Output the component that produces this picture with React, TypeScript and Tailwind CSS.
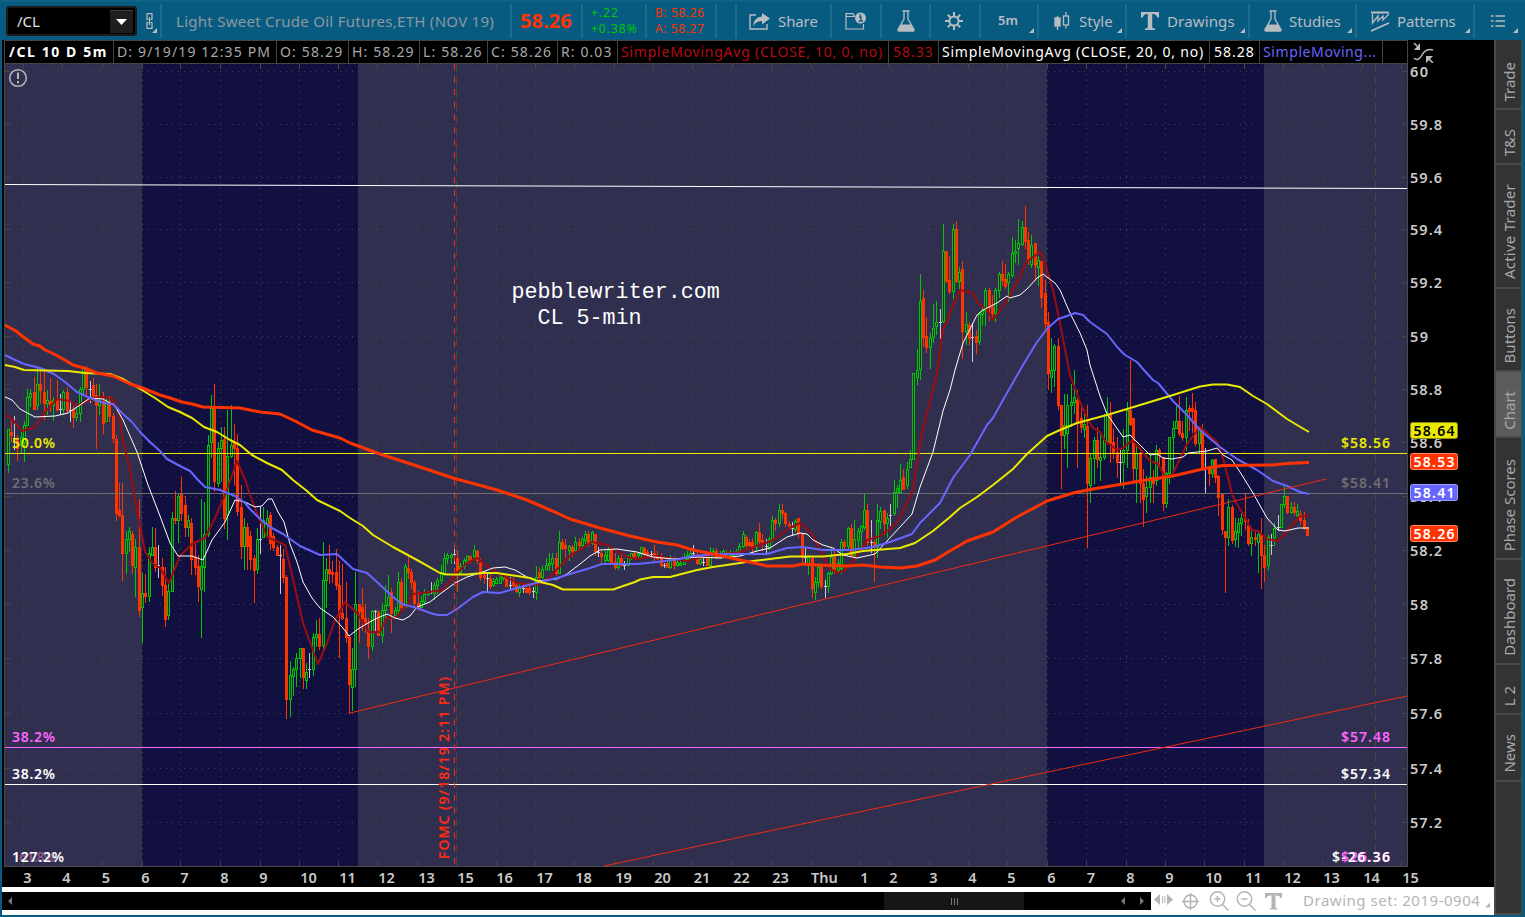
import React from "react";

const FONT = '"Noto Sans", "Open Sans", sans-serif';

// x + direction (u = up, d = down, n = flat), high, body top, body bottom, low
const CANDLES = `
8u 429 429 464 472|11d 421 432 435 441|14n 416 438 438 449|17d 435 439 448 460|21u 432 437 445 453|24u 421 425 442 461
27u 389 397 425 425|30u 389 393 397 406|34d 377 392 409 409|37u 367 384 405 409|40d 368 384 390 403|44d 368 392 403 419
47u 390 400 403 414|50d 378 401 406 411|53u 397 400 405 420|57d 380 398 409 411|60n 394 409 409 414|63u 390 392 409 414
67d 387 392 410 412|70n 400 410 410 421|73d 406 409 417 427|76u 404 413 417 420|80u 387 389 413 421|83u 367 368 389 395
86d 366 368 387 394|90n 381 389 389 402|93d 378 385 395 398|96d 384 395 405 448|99u 384 400 405 414|103d 392 401 423 433
106u 397 403 421 421|109d 396 401 416 421|113d 413 416 438 442|116d 435 439 513 520|119d 483 510 515 516|122d 483 515 553 580
126u 531 539 553 573|129u 527 531 539 551|132d 531 534 565 573|135u 539 547 567 596|139d 499 547 610 616|142u 573 593 607 642
145d 574 593 596 602|149u 547 553 596 601|152u 527 547 555 555|155d 528 547 567 571|158n 545 565 565 577|162d 558 567 585 595
165d 567 585 619 626|168u 583 591 615 619|172u 512 518 591 591|175d 491 518 520 523|178u 493 496 520 542|181d 477 494 513 520
185d 496 505 527 536|188u 515 520 527 536|191d 518 523 559 574|195d 544 557 567 574|198d 555 566 586 601|201u 499 566 589 637
204u 502 534 567 591|208u 435 445 534 536|211u 395 408 442 457|214d 384 408 481 491|218u 442 448 483 486|221u 427 440 448 481
224d 427 439 518 528|227u 410 456 515 539|231u 405 445 456 457|234d 424 443 448 485|237d 434 448 511 515|241d 485 507 546 558
244u 518 527 546 569|247d 523 527 546 569|250d 531 536 559 569|254d 555 558 570 602|257u 528 539 569 573|260n 507 539 539 553
263u 507 520 537 537|267u 510 518 523 537|270d 512 515 543 549|273d 533 536 547 550|277d 545 547 555 555|280n 545 555 555 593
283d 549 559 577 582|286d 575 577 699 718|290u 661 675 699 716|293u 667 669 676 695|296u 653 658 669 686|300u 648 648 658 677
303d 648 648 677 688|306u 663 672 680 688|309n 653 669 669 677|313u 633 637 669 675|316u 620 634 637 646|319d 618 634 646 649
323u 542 580 645 650|326u 558 569 580 607|329d 545 569 573 583|332d 561 572 574 582|336d 549 572 585 589|339d 561 585 613 657
342d 564 613 618 619|346d 582 618 637 642|349d 635 637 684 713|352u 648 669 687 710|355u 572 604 669 686|359d 604 604 611 642
362d 588 607 618 630|365d 604 618 623 632|368d 618 630 646 658|372u 610 611 646 650|375n 610 611 611 630|378d 610 612 635 635
382u 603 610 635 642|385u 585 605 610 620|388u 575 597 605 605|391d 588 592 613 632|395u 607 610 615 618|398u 572 582 610 613
401d 578 582 607 610|405u 564 566 607 607|408d 554 568 572 578|411d 569 572 582 588|414d 580 582 603 607|418d 591 603 607 610
421u 596 601 607 607|424u 589 594 601 603|428u 591 592 594 595|431n 582 592 592 593|434u 582 585 593 599|437u 578 580 585 593
441u 565 573 580 583|444u 553 558 573 575|447u 553 555 558 563|451u 553 555 557 563|454n 549 554 554 563|457d 550 558 570 591
460u 563 566 572 574|464u 558 560 566 568|467u 555 556 561 563|470d 555 556 560 563|474u 545 550 556 558|477d 550 551 560 563
480d 558 563 577 580|484d 574 575 577 583|487n 573 578 578 592|490d 574 578 586 588|493u 578 581 585 586|496u 577 579 583 583
500u 573 577 583 583|503u 573 576 578 580|506d 575 577 586 586|510n 577 585 585 589|513d 577 580 585 587|516d 582 585 591 592
519u 583 588 592 596|523n 584 588 588 592|526d 583 588 592 592|529d 583 588 592 594|533n 587 591 591 597|536u 566 577 592 599
539d 567 572 577 579|542u 565 569 577 578|546u 558 565 569 570|549u 553 563 565 570|552u 553 558 563 570|556d 553 558 573 575
559u 531 542 573 573|562d 539 542 548 549|565d 539 545 548 557|569u 545 546 550 560|572d 545 547 551 556|575u 537 542 550 551
579d 538 542 545 548|582u 537 539 545 548|585u 531 534 540 543|588d 531 534 543 546|592u 531 532 543 544|595d 534 534 551 555
598n 547 552 552 556|601d 551 553 556 562|605u 551 555 560 562|608u 547 550 560 561|611d 549 550 562 562|615d 553 562 567 569
618u 555 558 567 569|621d 555 558 565 565|624n 561 565 565 569|628u 555 557 565 565|631u 553 553 558 559|634d 552 553 557 558
638u 552 553 555 558|641u 547 547 553 557|644d 547 548 553 555|647d 550 552 554 556|651n 551 554 554 557|654d 545 553 555 560
657d 551 556 558 559|661d 553 557 565 566|664n 563 565 565 567|667d 560 563 567 567|670u 555 559 567 568|674d 557 560 565 569
677u 558 562 565 566|680u 561 563 565 565|684u 553 558 564 564|687u 551 555 559 561|690u 549 553 557 558|693n 545 553 553 557
697d 553 555 563 564|700u 556 559 563 564|703n 557 562 562 565|707d 553 558 565 565|710u 547 553 565 566|713u 548 551 555 557
716d 548 551 557 558|720u 551 553 557 558|723u 549 551 557 557|726d 550 553 557 557|730u 550 552 555 556|733u 551 553 555 556
736u 549 551 553 554|739u 543 546 552 553|743u 531 534 546 547|746d 535 537 545 547|749d 539 542 545 546|752d 538 542 547 552
756u 531 532 547 551|759d 523 532 541 545|762d 534 540 543 550|766n 539 546 546 553|769u 537 539 547 549|772u 516 520 539 541
775d 518 520 523 530|779u 504 510 523 526|782d 504 510 513 518|785d 512 513 523 526|789d 521 524 526 529|792n 522 528 528 534
795u 519 521 529 531|798d 518 518 533 537|802d 533 534 557 563|805n 548 557 557 562|808u 555 557 565 574|812d 557 558 588 597
815u 577 582 592 599|818u 563 567 582 587|821d 563 566 586 588|825n 580 586 586 597|828u 572 573 586 592|831u 547 557 573 574
834d 550 557 570 573|838u 559 563 570 572|841u 539 542 568 573|844d 540 542 546 548|848u 527 528 546 548|851d 524 528 555 556
854u 520 539 555 557|858u 528 531 540 547|861u 525 526 531 549|864u 493 510 527 529|867d 504 510 542 545|871n 520 542 542 552
874d 540 542 545 581|877u 504 520 547 557|880u 507 511 521 528|884d 510 510 523 534|887u 513 518 523 537|890n 504 515 515 525
894u 480 492 513 515|897u 485 488 492 507|900u 464 480 492 493|903d 469 477 489 489|907u 462 469 485 488|910u 450 459 467 467
913u 373 373 459 459|917u 349 370 377 384|920u 274 301 369 379|923d 290 298 337 346|926d 317 336 347 352|930u 333 338 347 368
933u 304 328 337 342|936u 301 322 326 334|940n 309 322 322 338|943u 224 251 321 322|946d 251 251 281 282|949d 256 280 291 293
953u 224 229 291 298|956d 221 229 281 282|959u 267 272 281 288|962d 261 269 331 358|966u 312 324 331 344|969d 322 325 338 344
972n 323 337 337 361|976d 330 336 342 353|979u 312 314 341 344|982u 307 310 314 325|985u 288 290 310 325|989d 288 290 307 320
992d 295 307 313 318|995u 288 290 313 321|999u 272 274 290 297|1002d 261 274 280 285|1005d 264 279 286 288|1008u 272 274 282 301
1012u 237 253 275 277|1015u 240 251 253 262|1018u 219 243 248 264|1022u 221 227 244 245|1025d 206 227 241 248|1028d 232 240 260 264
1031u 235 245 264 267|1035d 243 243 265 280|1038u 256 260 267 285|1041d 261 261 297 307|1045d 280 293 323 328|1048d 312 322 373 389
1051u 338 370 377 392|1054u 344 346 370 386|1058d 338 346 405 409|1061d 405 405 435 488|1064u 394 425 435 448|1067u 394 405 433 467
1071u 384 402 405 426|1074u 370 397 402 413|1077d 390 400 423 467|1081d 405 418 427 432|1084u 409 424 429 437|1087d 405 426 483 547
1090u 453 458 485 502|1094u 437 440 458 483|1097d 427 440 459 467|1100u 432 457 460 480|1104u 414 440 457 459|1107u 397 415 441 442
1110d 402 415 443 462|1113d 428 442 452 458|1117d 437 452 462 477|1120n 450 462 462 484|1123u 429 450 462 488|1127u 402 410 450 467
1130d 360 410 424 425|1133d 418 418 468 483|1136u 445 453 468 502|1140d 452 453 483 502|1143d 469 483 499 526|1146u 476 487 496 512
1150u 453 477 487 502|1153d 470 477 483 502|1156u 445 450 480 485|1159d 448 450 455 467|1163d 457 457 503 510|1166u 472 473 503 507
1169u 437 437 473 483|1173u 421 428 437 470|1176u 405 421 428 428|1179d 396 421 433 435|1182d 421 433 437 440|1186u 397 410 437 450
1189d 405 408 411 430|1192d 393 408 411 432|1195d 402 410 443 445|1199u 426 429 443 452|1202d 424 429 468 470|1205n 448 467 467 493
1209d 467 468 473 485|1212u 459 460 473 477|1215d 459 459 477 482|1218d 475 476 497 515|1222d 493 494 529 534|1225d 531 531 537 592
1228u 499 507 537 545|1232d 505 507 540 543|1235u 518 531 539 546|1238u 518 523 532 547|1241u 513 518 523 535|1245d 493 518 521 529
1248d 519 525 543 545|1251u 527 537 543 555|1255d 532 537 539 545|1258u 530 534 542 572|1261d 518 534 555 588|1264d 545 555 567 581
1268u 535 537 565 569|1271n 534 545 545 554|1274u 523 528 537 545|1278n 515 527 527 530|1281u 504 504 527 527|1284u 485 496 504 507
1287d 496 496 512 513|1291u 502 507 512 513|1294d 502 507 512 515|1297u 504 511 515 516|1300d 510 514 520 524|1304d 512 520 528 529
1307d 527 527 535 535`
  .trim()
  .split(/[|\n]/)
  .map((row) => {
    const [head, high, top, bottom, low] = row.split(" ");
    return {
      x: parseInt(head),
      dir: head.slice(-1),
      high: Number(high),
      top: Number(top),
      bottom: Number(bottom),
      low: Number(low),
    };
  });

const COLORS: Record<string, string> = { u: "#00c800", d: "#ff3300", n: "#c8c8d0" };

const AVERAGES = [
  {
    color: "#9c0d12",
    width: 2,
    points:
      "5,415 12,419 22,431 35,427 45,412 57,399 70,401 77,406 90,400 100,397 112,398 118,410 123,440 130,470 135,500 139,520 145,551 152,563 160,568 169,583 180,556 192,544 205,538 215,518 225,495 237,461 246,482 250,495 257,513 263,527 267,537 285,545 292,575 303,623 318,664 327,643 335,620 345,602 357,613 369,632 380,632 387,617 395,618 407,605 413,594 430,592 443,590 450,581 457,573 467,563 477,558 487,566 500,574 517,583 533,585 540,584 550,577 560,566 570,556 592,542 607,545 627,557 637,559 657,556 673,559 687,561 707,556 740,552 757,546 773,540 790,528 800,523 812,534 820,550 830,569 838,573 845,570 857,556 867,540 880,536 890,529 898,521 912,493 922,433 937,373 943,330 953,306 960,290 973,293 978,303 987,310 993,320 1007,300 1020,277 1026,262 1040,252 1043,257 1053,290 1060,323 1070,375 1080,402 1088,420 1093,428 1100,432 1105,441 1117,450 1123,448 1132,440 1140,449 1150,461 1158,464 1165,477 1172,475 1180,459 1187,444 1200,427 1217,442 1223,458 1233,497 1252,530 1258,531 1267,539 1278,541 1288,530 1300,516 1309,516",
  },
  {
    color: "#ffffff",
    width: 1,
    points:
      "5,397 12,400 20,409 35,417 55,416 68,413 80,405 90,398 103,399 115,406 123,420 137,452 148,485 160,516 170,543 178,556 192,556 203,560 212,540 225,522 235,500 245,502 255,507 262,506 268,499 272,499 278,512 284,522 290,544 297,562 303,582 312,598 320,608 333,617 343,628 349,636 358,629 375,619 387,614 395,618 403,620 410,616 417,607 430,602 440,594 455,583 467,577 480,573 493,568 505,567 515,570 527,577 537,581 557,579 567,574 580,564 590,556 600,550 617,549 637,552 653,557 673,559 697,557 720,558 740,556 757,551 770,548 787,537 800,533 807,534 813,540 823,545 833,548 843,555 857,558 875,554 887,541 900,527 912,514 920,487 933,452 943,411 950,390 955,370 963,343 977,315 983,310 997,303 1007,296 1010,298 1020,295 1027,289 1037,278 1043,274 1055,283 1060,290 1070,313 1080,333 1087,350 1090,365 1100,396 1107,414 1123,437 1130,435 1140,445 1150,455 1157,454 1163,458 1172,459 1183,457 1188,453 1207,451 1217,448 1223,455 1232,460 1240,472 1253,493 1267,518 1278,530 1285,531 1298,528 1309,528",
  },
  {
    color: "#6666ff",
    width: 2,
    points:
      "5,355 13,359 24,364 40,368 54,374 65,382 77,392 90,398 104,403 113,404 123,414 132,422 140,432 150,442 160,451 167,459 180,466 190,471 198,480 205,487 220,490 235,496 245,503 250,509 260,519 270,527 283,534 300,546 320,555 337,554 353,569 367,573 377,582 393,597 402,604 417,608 430,613 438,615 447,615 457,609 473,597 483,592 500,593 517,588 540,582 557,578 570,574 587,569 602,564 637,564 657,562 680,559 693,556 720,554 767,554 787,548 803,547 823,550 850,550 873,547 890,542 912,534 920,523 940,503 953,478 970,455 987,425 993,418 1003,400 1023,365 1037,342 1047,329 1058,319 1070,315 1075,313 1083,315 1090,322 1107,334 1118,348 1125,355 1137,362 1143,369 1153,380 1158,383 1173,401 1187,415 1200,430 1220,447 1237,459 1257,470 1273,481 1287,486 1300,492 1309,494",
  },
  {
    color: "#eaea00",
    width: 2,
    points:
      "5,365 15,367 24,370 68,371 85,373 110,374 123,379 142,390 155,398 168,407 180,412 192,418 204,427 217,432 230,440 240,445 252,455 267,463 282,470 293,480 307,491 317,500 340,511 350,518 363,526 373,535 393,547 417,560 440,573 447,574.5 467,574.5 483,573 497,573 517,576 530,578 540,582 553,585 563,589.5 613,589.5 635,582 640,579.5 653,577 670,577 697,570 713,567 740,563 753,561 790,556.5 823,556.5 847,554 863,551 900,548 915,543 933,531 950,517 960,508 977,497 993,485 1013,469 1027,454 1047,436 1060,430 1077,423 1107,415 1127,409 1173,395 1200,386.5 1213,384.5 1227,384.5 1240,387 1253,396 1267,404 1287,419 1297,425 1309,432",
  },
  {
    color: "#ff3300",
    width: 3,
    points:
      "5,325 16,331 22,336 33,344 40,346 45,350 54,354 63,359 73,365 84,368 97,373 113,376 130,384 140,387 150,391 160,395 170,398 182,402 192,404 203,407 240,408 260,412 280,414 295,421 312,430 340,438 350,443 380,454 417,466 453,478 497,490 527,500 557,513 570,519 600,528 630,536 657,542 677,545 693,550 713,554 740,560 767,566 793,566 803,564 817,565 847,566 863,565 880,567 900,568 917,566 935,560 950,551 967,541 993,532 1017,517 1047,501 1073,493 1093,489 1123,484 1140,481 1173,476 1207,468 1223,465.5 1273,465 1287,463.5 1309,462.5",
  },
];

const HOUR_LINES = [
  23, 62, 102, 142, 180, 220, 260, 299, 338, 377, 417, 456, 496, 535, 574, 614, 653, 692, 732, 771, 811, 860, 889,
  929, 968, 1007, 1047, 1086, 1126, 1165, 1204, 1244, 1283, 1322, 1362, 1401,
];

const HOURS: [string, number][] = [
  ["3", 27.5], ["4", 66.5], ["5", 106], ["6", 145.5], ["7", 184.5], ["8", 224.5], ["9", 263.5], ["10", 308.5],
  ["11", 347.5], ["12", 386.5], ["13", 426.5], ["15", 465.5], ["16", 504.5], ["17", 544.5], ["18", 583.5],
  ["19", 623.5], ["20", 662.5], ["21", 702], ["22", 741.5], ["23", 780.5], ["Thu", 824.5], ["1", 864.5],
  ["2", 893.5], ["3", 933.5], ["4", 972.5], ["5", 1011.5], ["6", 1051.5], ["7", 1091], ["8", 1130.5],
  ["9", 1169.5], ["10", 1213.5], ["11", 1253.5], ["12", 1292.5], ["13", 1331.5], ["14", 1371.5], ["15", 1410.5],
];

const PRICES: [string, number][] = [
  ["60", 71], ["59.8", 124], ["59.6", 177], ["59.4", 229], ["59.2", 282], ["59", 336], ["58.8", 389],
  ["58.6", 442], ["58.4", 496], ["58.2", 550], ["58", 604], ["57.8", 658], ["57.6", 713], ["57.4", 768],
  ["57.2", 822],
];

const LEVELS = [
  { y: 453, color: "#eaea00", label: "50.0%", price: "$58.56" },
  { y: 493, color: "#6e6e72", label: "23.6%", price: "$58.41" },
  { y: 747, color: "#ff66ff", label: "38.2%", price: "$57.48" },
  { y: 784, color: "#ffffff", label: "38.2%", price: "$57.34" },
];

const TAGS = [
  { y: 422, color: "#eaea00", text: "#000000", border: "#8a8a20", price: "58.64" },
  { y: 453, color: "#ff3300", text: "#ffffff", border: "#ff8866", price: "58.53" },
  { y: 484, color: "#6666ff", text: "#ffffff", border: "#9a9aff", price: "58.41" },
  { y: 525, color: "#ff3300", text: "#ffffff", border: "#ff8866", price: "58.26" },
];

const Chart = () => (
  <svg className="block shrink-0 overflow-visible" width="1492" height="823" viewBox="2 64 1492 823" fontFamily={FONT}>
    <rect x="2" y="64" width="1492" height="823" fill="#000" />
    <rect x="5" y="64" width="1402" height="802" fill="#312f4f" />
    <rect x="142" y="64" width="216" height="802" fill="#121040" />
    <rect x="1047" y="64" width="217" height="802" fill="#121040" />

    {/* grid */}
    <g stroke="#47473f" shapeRendering="crispEdges">
      {HOUR_LINES.map((x) => (
        <g key={x}>
          <line x1={x + 0.5} x2={x + 0.5} y1="68" y2="862" strokeDasharray="1 5" />
          <line x1={x + 0.5} x2={x + 0.5} y1="64" y2="68" />
          <line x1={x + 0.5} x2={x + 0.5} y1="862" y2="866" />
        </g>
      ))}
      {PRICES.map(([label, y]) => (
        <g key={label}>
          <line x1="10" x2="1404" y1={y + 0.5} y2={y + 0.5} strokeDasharray="1 5" />
          <line x1="5" x2="10" y1={y + 0.5} y2={y + 0.5} />
          <line x1="1403" x2="1407" y1={y + 0.5} y2={y + 0.5} />
        </g>
      ))}
      <line x1="456.5" x2="456.5" y1="64" y2="866" strokeDasharray="8 5" />
      <line x1="1375.5" x2="1375.5" y1="64" y2="866" strokeDasharray="8 5" />
      <path d="M4.500 64V866.500H1407.500V64" fill="none" stroke="#4a4a4a" />
    </g>

    {/* candles */}
    <g shapeRendering="crispEdges">
      {CANDLES.map((c) => {
        const color = COLORS[c.dir];
        const h = Math.max(1, c.bottom - c.top + 1);
        return (
          <g key={c.x}>
            <rect x={c.x} y={c.high} width="1" height={c.low - c.high + 1} fill={color} />
            <rect x={c.x - 1} y={c.top} width="3" height={h} fill={color} />
            {c.dir === "u" && h > 2 && <rect x={c.x} y={c.top + 1} width="1" height={h - 2} fill="#1d2a3c" />}
          </g>
        );
      })}
    </g>

    {/* fibonacci levels */}
    {LEVELS.map((l) => (
      <rect key={l.y} x="5" y={l.y} width="1402" height="1" fill={l.color} />
    ))}

    {AVERAGES.map((a) => (
      <polyline key={a.color} points={a.points} fill="none" stroke={a.color} strokeWidth={a.width} strokeLinejoin="round" />
    ))}

    {/* trend lines */}
    <line x1="5" y1="184.5" x2="1407" y2="188.500" stroke="#fff" />
    <line x1="350" y1="713" x2="1326" y2="479" stroke="#f02a10" />
    <line x1="604" y1="866" x2="1407" y2="696" stroke="#f02a10" />
    <line x1="454.5" y1="64" x2="454.5" y2="866" stroke="#ff2a10" strokeDasharray="6 6.600" />

    <g fontSize="14" fontWeight="600">
      {LEVELS.map((l) => (
        <g key={l.y} fill={l.color}>
          <text x="12" y={l.y - 5} textLength="43">{l.label}</text>
          <text x="1341" y={l.y - 5} textLength="49">{l.price}</text>
        </g>
      ))}
      <text x="12" y="861.500" textLength="44" fill="#8a5a8c">161.8%</text>
      <text x="12" y="861.500" textLength="52" fill="#fff">127.2%</text>
      <text x="1341" y="861.500" textLength="49" fill="#ff66ff">$26.36</text>
      <text x="1332" y="861.500" textLength="58" fill="#fff">$-26.36</text>
      <text transform="translate(449 859) rotate(-90)" textLength="182" fill="#ff2a10">
        FOMC (9/18/19 2:11 PM)
      </text>
    </g>

    <g fill="#fff" fontSize="21.7" fontFamily='"Liberation Mono", monospace' xmlSpace="preserve">
      <text x="511.500" y="297.500">pebblewriter.com</text>
      <text x="537.500" y="323.500">CL 5-min</text>
    </g>

    <circle cx="18" cy="78" r="8.300" fill="none" stroke="#b4b4b8" strokeWidth="1.600" />
    <path d="M18 72.500v6.500M18 81v2.200" stroke="#b4b4b8" strokeWidth="2" />

    {/* axis labels */}
    <g fontSize="14.500" fontWeight="600" fill="#cacaca">
      {HOURS.map(([label, x]) => (
        <text key={x} x={x} y="883" textAnchor="middle">{label}</text>
      ))}
      {PRICES.map(([label, y]) => (
        <text key={y} x="1410" y={y + 6} textLength={label.length > 2 ? 32 : 18}>{label}</text>
      ))}
    </g>
    {TAGS.map((t) => (
      <g key={t.y}>
        <rect x="1410.5" y={t.y + 0.5} width="47" height="16" rx="2" fill={t.color} stroke={t.border} />
        <text x="1413.500" y={t.y + 13.5} fontSize="14" fontWeight="600" textLength="41" fill={t.text}>{t.price}</text>
      </g>
    ))}
  </svg>
);

const Corner = () => (
  <span className="absolute bottom-[5px] right-[3px] h-[5px] w-[5px] bg-[#b9bcc0] [clip-path:polygon(100%_0,100%_100%,0_100%)]" />
);

const Cell = ({ className = "", corner = false, children }: { className?: string; corner?: boolean; children?: React.ReactNode }) => (
  <div className={`relative flex h-[34px] shrink-0 items-center border-r-2 border-[#1d6c8b] ${className}`}>
    {children}
    {corner && <Corner />}
  </div>
);

const Flask = () => (
  <svg width="18" height="22" viewBox="0 0 18 22" fill="none" stroke="#b9bcc0">
    <path d="M5.500 1h7M7 1v8L1 19.500Q0.600 21 2 21H16Q17.400 21 17 19.500L11 9V1" strokeWidth="1.300" />
    <path d="M4 14.500h10l3 5.500q0 1-1 1H2q-1 0-1-1z" fill="#b9bcc0" stroke="none" />
  </svg>
);

const Toolbar = () => (
  <div className="flex h-10 items-start border-t-2 border-[#0e6288] pl-px pr-[4px] pt-[2px] text-[15px] text-[#b9bcc0]">
    <Cell className="w-[161px] pl-[5px]" corner>
      <div className="flex h-[30px] w-[131px] items-center justify-between rounded-[3px] border-2 border-[#1c1c1c] bg-black pl-[9px] pr-[2px] text-[15px] text-[#e0e0e0]">
        <span>/CL</span>
        <span className="flex h-[23px] w-[23px] items-center justify-center border-t border-[#3c3c3c] bg-[#1e1e1e]">
          <svg width="11" height="6" viewBox="0 0 11 6"><path d="M0 0h11L5.500 6z" fill="#fff" /></svg>
        </span>
      </div>
      <svg className="ml-[9px]" width="7" height="16" viewBox="0 0 7 16" fill="none" stroke="#b9bcc0" strokeWidth="1.200">
        <path d="M2.500 6.500H1V.6h5v5.900H4.500M2.500 9.500H1v5.900h5V9.500H4.500M3.500 4v8" />
      </svg>
    </Cell>
    <Cell className="w-[350px] pl-[14px] tracking-[0.27px] text-[#8d989e]">Light Sweet Crude Oil Futures,ETH (NOV 19)</Cell>
    <Cell className="w-[71px] pl-[8px] text-[20px] font-bold tracking-[0.1px] text-[#ff3300]">58.26</Cell>
    <Cell className="w-[64px] flex-col items-start! justify-center pl-2 text-xs leading-4 tracking-[1px] text-[#00c800]">
      <span>+.22</span>
      <span>+0.38%</span>
    </Cell>
    <Cell className="w-[70px] flex-col items-start! justify-center pl-2 text-xs leading-4 tracking-[0.6px] text-[#ff3300]">
      <span>B: 58.26</span>
      <span>A: 58.27</span>
    </Cell>
    <Cell className="w-[20px]" />
    <Cell className="w-[95px] gap-2 pl-3 tracking-[-0.1px]">
      <svg width="21" height="17" viewBox="0 0 21 17">
        <path d="M7 2H1v14h17v-5" fill="none" stroke="#b9bcc0" strokeWidth="1.400" />
        <path d="M13 0l8 5.500-8 6V8Q7.500 8 4 13 5 4 13 3.500z" fill="#b9bcc0" />
      </svg>
      Share
    </Cell>
    <Cell className="w-[50px] justify-center">
      <svg width="22" height="18" viewBox="0 0 22 18">
        <path d="M10 4H9L8 1.700H1V17H18.500V12M1 4.500H10" fill="none" stroke="#b9bcc0" strokeWidth="1.200" />
        <circle cx="15.500" cy="6" r="5.500" fill="#b9bcc0" />
        <path d="M14 5h2v4M13.800 9h4M15.200 2.200v1.500" stroke="#085b80" strokeWidth="1.400" fill="none" />
      </svg>
    </Cell>
    <Cell className="w-[49px] justify-center"><Flask /></Cell>
    <Cell className="w-[50px] justify-center pr-[2px]">
      <svg width="18" height="18" viewBox="-9 -9 18 18" stroke="#b9bcc0" fill="none">
        <circle r="4.600" strokeWidth="2" />
        <path d="M0-9V-5M0 9V5M-9 0H-5M9 0H5M-6.200-6.200L-3.600-3.600M6.200 6.200L3.600 3.600M6.200-6.200L3.600-3.600M-6.200 6.200L-3.600 3.600" strokeWidth="2" />
      </svg>
    </Cell>
    <Cell className="w-[58px] pl-[17px] text-[13px] font-semibold" corner>5m</Cell>
    <Cell className="w-[88px] gap-[9px] pl-[15px]" corner>
      <svg width="16" height="18" viewBox="0 0 16 18" fill="none" stroke="#b9bcc0" strokeWidth="1.300">
        <rect x="1" y="6" width="5" height="8" fill="#b9bcc0" />
        <path d="M3.500 4v14M12 0v4M12 13v3.500" />
        <rect x="9.500" y="4" width="5" height="9" />
      </svg>
      Style
    </Cell>
    <Cell className="w-[123px] gap-[8px] pl-[14px] tracking-[0.15px]" corner>
      <svg width="18" height="18" viewBox="0 0 18 18"><path d="M0 0h18v5.500h-1.800Q15.500 2 12 2h-.8v13q0 1.500 2.800 1.500V18H4v-1.500q2.800 0 2.800-1.500V2H6Q2.500 2 1.800 5.500H0z" fill="#b9bcc0" /></svg>
      Drawings
    </Cell>
    <Cell className="w-[107px] gap-[7px] pl-[14px]" corner><Flask />Studies</Cell>
    <Cell className="w-[118px] gap-[7px] pl-[13px] tracking-[-0.1px]" corner>
      <svg width="20" height="21" viewBox="0 0 20 21" fill="none" stroke="#b9bcc0" strokeWidth="1.300">
        <path d="M1 1.500h18M1 20l18-8" strokeWidth="1.800" />
        <path d="M2.500 3v9l5.500-7v5l5-5v4l6-6" />
      </svg>
      Patterns
    </Cell>
    <div className="relative flex h-[34px] flex-1 items-center pl-4">
      <svg width="15" height="14" viewBox="0 0 15 14" stroke="#b9bcc0" strokeWidth="1.500">
        <path d="M0 2h2.500M4.500 2H14M0 7h2.500M4.500 7H14M0 12h2.500M4.500 12H14" />
      </svg>
      <Corner />
    </div>
  </div>
);

const InfoBar = () => {
  const cells = [
    { text: "/CL 10 D 5m", css: "w-[109px] pl-[4px] font-bold text-white tracking-[1.6px]" },
    { text: "D: 9/19/19 12:35 PM", css: "w-[163px] text-[#a8a8a8] tracking-[1.15px]" },
    { text: "O: 58.29", css: "w-[72px] text-[#a8a8a8] tracking-[1.15px]" },
    { text: "H: 58.29", css: "w-[71px] text-[#a8a8a8] tracking-[1.15px]" },
    { text: "L: 58.26", css: "w-[68px] text-[#a8a8a8] tracking-[1.15px]" },
    { text: "C: 58.26", css: "w-[70px] text-[#a8a8a8] tracking-[1.15px]" },
    { text: "R: 0.03", css: "w-[60px] text-[#a8a8a8] tracking-[1.1px]" },
    { text: "SimpleMovingAvg (CLOSE, 10, 0, no)", css: "w-[271px] text-[#b40c10] tracking-[0.77px]" },
    { text: "58.33", css: "w-[50px] pl-[4px] text-[#b40c10] tracking-[1px]" },
    { text: "SimpleMovingAvg (CLOSE, 20, 0, no)", css: "w-[271px] text-white tracking-[0.77px]" },
    { text: "58.28", css: "w-[50px] pl-[4px] text-white tracking-[1px]" },
    { text: "SimpleMoving...", css: "w-[123px] text-[#6666ff] tracking-[0.6px]" },
    { text: "", css: "w-[25px]" },
  ];
  return (
    <div className="flex h-6 bg-black pl-[2px] text-sm">
      <div className="flex border-y border-l border-[#444]">
        {cells.map((c, i) => (
          <div key={i} className={`flex shrink-0 items-center whitespace-nowrap border-r border-[#444] pl-[3px] ${c.css}`}>
            {c.text}
          </div>
        ))}
      </div>
      <svg className="ml-[5px] mt-[3px]" width="22" height="20" viewBox="0 0 22 20" fill="none" stroke="#b9bcc0">
        <path d="M1 15Q5 19 9 12T20 7" strokeWidth="1.500" />
        <path d="M1 0l3 3" strokeWidth="1.600" />
        <path d="M7 0v7H1zM13 13h7l-7 7z" fill="#b9bcc0" stroke="none" />
        <path d="M16 16l4 4" strokeWidth="1.600" />
      </svg>
    </div>
  );
};

const BottomBar = () => (
  <div className="flex h-7 items-center bg-white text-[#b4b4b4]">
    <div className="flex h-[18px] w-[1149px] items-center bg-black">
      <svg className="ml-1.5" width="4" height="8" viewBox="0 0 4 8"><path d="M4 0v8L0 4z" fill="#777" /></svg>
      <div className="ml-[872px] flex h-full w-[140px] items-center justify-center gap-[2px] bg-[#161616]">
        <span className="h-[7px] w-px bg-[#777]" />
        <span className="h-[7px] w-px bg-[#777]" />
        <span className="h-[7px] w-px bg-[#777]" />
      </div>
      <svg className="ml-[97px]" width="4" height="8" viewBox="0 0 4 8"><path d="M4 0v8L0 4z" fill="#777" /></svg>
      <svg className="ml-[15px]" width="4" height="8" viewBox="0 0 4 8"><path d="M0 0v8l4-4z" fill="#777" /></svg>
    </div>
    <svg className="ml-[3px]" width="130" height="20" viewBox="0 0 130 20" fill="none" stroke="#b4b4b4" strokeWidth="1.500">
      <path d="M6 3v11L0 8.500zM13 3v11l6-5.500z" fill="#b4b4b4" stroke="none" />
      <path d="M8.500 5v7M10.800 5v7" strokeWidth="1" />
      <circle cx="36.500" cy="10.500" r="6.500" />
      <path d="M36.500 2v17M28 10.500h17" />
      <circle cx="63.500" cy="8" r="7.200" />
      <path d="M68.500 13.500l6 6M60.500 8h6M63.500 5v6" />
      <circle cx="90.500" cy="8" r="7.200" />
      <path d="M95.500 13.500l6 6M87.500 8h6" />
      <path d="M111 2h17v5h-1.500q-.5-2.500-4-2.500h-1V16q0 1.500 2 1.500v1H115.500v-1q2 0 2-1.500V4.500h-1q-3.500 0-4 2.500H111z" fill="#b4b4b4" stroke="none" />
    </svg>
    <span className="-mt-[2px] ml-[19px] whitespace-nowrap text-[15px] tracking-[0.53px]">Drawing set: 2019-0904</span>
    <span className="ml-auto mr-[4px] mt-2 h-[5px] w-[5px] bg-[#b4b4b4] [clip-path:polygon(100%_0,100%_100%,0_100%)]" />
  </div>
);

const SideTabs = () => {
  const tabs = [
    { name: "Trade", css: "h-[70px] pb-[6px]" },
    { name: "T&S", css: "h-[55px] pb-[7px]" },
    { name: "Active Trader", css: "h-[124px] pb-[8px] tracking-[0.25px]" },
    { name: "Buttons", css: "h-[83px] pb-[7px]" },
    { name: "Chart", css: "h-[66px] pb-[6px] bg-[#5c5c5c]" },
    { name: "Phase Scores", css: "h-[122px] pb-[7px]" },
    { name: "Dashboard", css: "h-[105px] pb-[7px]" },
    { name: "L 2", css: "h-[50px] pb-[7px]" },
    { name: "News", css: "h-[67px] pb-[7px]" },
  ];
  return (
    <div className="flex w-[28px] shrink-0 flex-col border-x-2 border-b-2 border-r-1 border-[#4a4a4a] bg-[#333]">
      {tabs.map((t) => (
        <div key={t.name} className={`flex shrink-0 items-end justify-center border-b-2 border-[#4a4a4a] text-[15px] text-[#a8a8a8] ${t.css}`}>
          <span className="rotate-180 whitespace-nowrap leading-6 [writing-mode:vertical-rl]">{t.name}</span>
        </div>
      ))}
    </div>
  );
};

const App = () => {
  return (
    <div className="h-[917px] w-[1525px] overflow-hidden bg-[#085b80] font-['Noto_Sans','Open_Sans',sans-serif]">
      <Toolbar />
      <div className="flex h-[875px] pl-[2px] pr-[3px]">
        <div className="flex w-[1492px] shrink-0 flex-col">
          <InfoBar />
          <Chart />
          <BottomBar />
        </div>
        <SideTabs />
      </div>
    </div>
  );
};

export default App;
